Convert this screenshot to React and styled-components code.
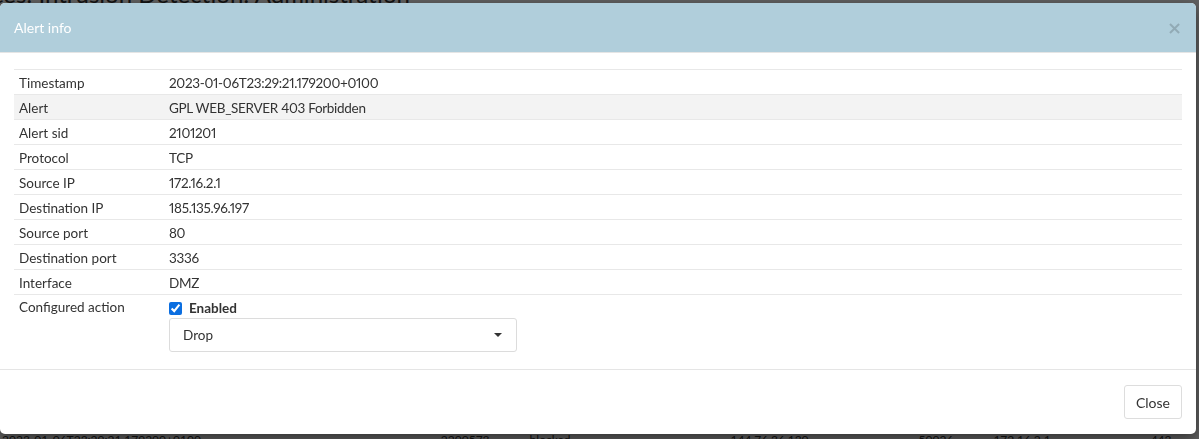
import styled, { createGlobalStyle } from "styled-components"

const GlobalStyle = createGlobalStyle`
    html, body {
        margin: 0;
        padding: 0;
        background: #fff;
        font-family: Lato, "Noto Sans", sans-serif;
        font-size: 14px;
        color: #333;
        overflow: hidden;
    }
`

const Page = styled.div`
    height: 439px;
    display: flex;
    flex-direction: column;
    overflow: hidden;
`

const PageTitle = styled.h1`
    margin: -18px 0 0 -8px;
    font-size: 24px;
    line-height: 24px;
    font-weight: 400;
    white-space: nowrap;
`

const PageRow = styled.div`
    margin-top: auto;
    display: flex;
    gap: 40px;
    height: 6px;
    padding-left: 2px;
    font-size: 12px;
    line-height: 14px;
    white-space: nowrap;
`

const Backdrop = styled.div`
    position: fixed;
    inset: 0;
    background: rgba(0, 0, 0, 0.62);
    padding: 3px 3px 0 0;
`

const Dialog = styled.div`
    background: #fff;
    border-radius: 5px;
    box-shadow: 0 5px 15px rgba(0, 0, 0, 0.5);
    overflow: hidden;
`

const Header = styled.div`
    height: 49px;
    display: flex;
    align-items: center;
    justify-content: space-between;
    padding: 0 14px 0 14px;
    background: #b0cedb;
    border-bottom: 1px solid #e5e5e5;
`

const Title = styled.h4`
    margin: 0;
    color: #fff;
    font-size: 14px;
    font-weight: 400;
`

const CloseX = styled.span`
    font-size: 18px;
    font-weight: 700;
    line-height: 1;
    color: #000;
    opacity: 0.17;
    font-family: "DejaVu Sans", sans-serif;
`

const Body = styled.div`
    padding: 16px 14px 15px;
`

const Table = styled.table`
    width: 100%;
    border-collapse: collapse;
    font-size: 13.5px;
`

const Row = styled.tr`
    background: ${p => (p.$striped ? "#f3f3f3" : "transparent")};
    border-top: 1px solid #e8e8e8;
`

const Label = styled.td`
    width: 150px;
    height: 22px;
    padding: 2px 0 0 5px;
    vertical-align: ${p => (p.$top ? "top" : "middle")};
    padding-top: ${p => (p.$top ? "4px" : "2px")};
`

const Value = styled.td`
    padding: 2px 0 0;
    letter-spacing: -0.3px;
    font-variant-numeric: proportional-nums;
    vertical-align: ${p => (p.$top ? "top" : "middle")};
    padding-top: ${p => (p.$top ? "6px" : "2px")};
    padding-bottom: ${p => (p.$top ? "2px" : "0")};
`

const CheckLine = styled.label`
    display: flex;
    align-items: center;
    gap: 7px;
    height: 14px;
    font-weight: 700;
    letter-spacing: 0;
`

const Check = styled.input`
    margin: 0;
    width: 13px;
    height: 13px;
    accent-color: #0b6ee0;
`

const Select = styled.div`
    margin-top: 3px;
    box-sizing: border-box;
    width: 348px;
    height: 34px;
    border: 1px solid #dcdcdc;
    border-radius: 3px;
    display: flex;
    align-items: center;
    justify-content: space-between;
    padding: 0 14px 0 13px;
    letter-spacing: 0;
`

const Caret = styled.span`
    width: 0;
    height: 0;
    border-left: 4px solid transparent;
    border-right: 4px solid transparent;
    border-top: 4px solid #333;
`

const Footer = styled.div`
    border-top: 1px solid #e5e5e5;
    padding: 15px 14px 15px;
    display: flex;
    justify-content: flex-end;
`

const Button = styled.button`
    height: 34px;
    padding: 0 11px;
    background: #fff;
    border: 1px solid #ddd;
    border-radius: 3px;
    font-family: inherit;
    font-size: 14px;
    color: #333;
`

const Cell = styled.span`
    margin-left: ${p => p.$gap || 0}px;
`

const rows = [
    ["Timestamp", "2023-01-06T23:29:21.179200+0100"],
    ["Alert", "GPL WEB_SERVER 403 Forbidden"],
    ["Alert sid", "2101201"],
    ["Protocol", "TCP"],
    ["Source IP", "172.16.2.1"],
    ["Destination IP", "185.135.96.197"],
    ["Source port", "80"],
    ["Destination port", "3336"],
    ["Interface", "DMZ"],
]

const App = () => {
    return (
        <>
            <GlobalStyle />
            <Page>
                <PageTitle>ces: Intrusion Detection: Administration</PageTitle>
                <PageRow>
                    <Cell>2023-01-06T23:29:21.179200+0100</Cell>
                    <Cell $gap={200}>2200573</Cell>
                    <Cell>blocked</Cell>
                    <Cell $gap={120}>144.76.36.130</Cell>
                    <Cell $gap={70}>50026</Cell>
                    <Cell>172.16.2.1</Cell>
                    <Cell $gap={60}>443</Cell>
                    <Cell>ET EXPLOIT Mod</Cell>
                </PageRow>
            </Page>
            <Backdrop>
                <Dialog>
                    <Header>
                        <Title>Alert info</Title>
                        <CloseX>×</CloseX>
                    </Header>
                    <Body>
                        <Table>
                            <tbody>
                                {rows.map(([k, v], i) => (
                                    <Row key={k} $striped={i === 1}>
                                        <Label>{k}</Label>
                                        <Value>{v}</Value>
                                    </Row>
                                ))}
                                <Row>
                                    <Label $top>Configured action</Label>
                                    <Value $top>
                                        <CheckLine>
                                            <Check type="checkbox" defaultChecked />
                                            Enabled
                                        </CheckLine>
                                        <Select>
                                            <span>Drop</span>
                                            <Caret />
                                        </Select>
                                    </Value>
                                </Row>
                            </tbody>
                        </Table>
                    </Body>
                    <Footer>
                        <Button>Close</Button>
                    </Footer>
                </Dialog>
            </Backdrop>
        </>
    )
}

export default App
